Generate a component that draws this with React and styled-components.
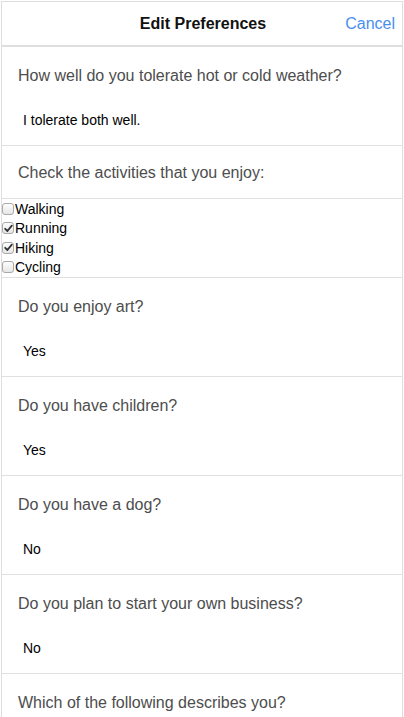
import React from "react";
import styled, { createGlobalStyle } from "styled-components";

const Global = createGlobalStyle`
  html, body { margin: 0; padding: 0; background: #fff; }
  body { font-family: "Liberation Sans", Arial, Helvetica, sans-serif; }
  * { box-sizing: border-box; }
`;

const Page = styled.div`
  margin: 1px 0 0 1px;
  width: 402px;
  border: 1px solid #dedede;
  border-bottom: none;
  overflow: hidden;
`;

const Header = styled.header`
  position: relative;
  height: 45px;
  display: flex;
  align-items: center;
  justify-content: center;
  border-bottom: 2px solid #dedede;
`;

const Title = styled.h1`
  margin: 0;
  font-size: 16px;
  font-weight: bold;
  color: #111;
  transform: translateX(1px);
`;

const CancelButton = styled.button`
  position: absolute;
  right: 7px;
  top: 50%;
  transform: translateY(-50%);
  background: none;
  border: none;
  padding: 0;
  font-family: inherit;
  font-size: 16px;
  color: #4a8ef0;
  cursor: pointer;
`;

const Section = styled.section`
  border-bottom: 1px solid #e0e0e0;
  padding: ${(p) => (p.$compact ? "17px 16px 15px" : "19px 16px 15px")};
`;

const Question = styled.div`
  font-size: 16px;
  line-height: 20px;
  color: #4d4d4d;
`;

const Answer = styled.div`
  margin-top: 24px;
  padding-left: 5px;
  font-size: 14px;
  line-height: 20px;
  color: #000;
`;

const CheckList = styled.div`
  border-bottom: 1px solid #e0e0e0;
  display: flex;
  flex-direction: column;
`;

const CheckRow = styled.label`
  display: flex;
  align-items: center;
  height: 19.5px;
  font-size: 14px;
  color: #000;
`;

const Box = styled.span`
  width: 12px;
  height: 12px;
  margin: 0 1px 0 0;
  border: 1px solid #a9a9a9;
  border-radius: 3px;
  background: linear-gradient(#fdfdfd, #e6e6e6);
  display: inline-flex;
  align-items: center;
  justify-content: center;
  flex: none;
`;

const Check = () => (
  <svg width="9" height="9" viewBox="0 0 9 9">
    <path d="M1.2 4.8 L3.4 7 L7.8 1.6" fill="none" stroke="#333" strokeWidth="1.8" strokeLinecap="round" strokeLinejoin="round" />
  </svg>
);

const activities = [
  { name: "Walking", checked: false },
  { name: "Running", checked: true },
  { name: "Hiking", checked: true },
  { name: "Cycling", checked: false },
];

const QA = ({ q, a }) => (
  <Section>
    <Question>{q}</Question>
    <Answer>{a}</Answer>
  </Section>
);

export default function App() {
  return (
    <>
      <Global />
      <Page>
        <Header>
          <Title>Edit Preferences</Title>
          <CancelButton>Cancel</CancelButton>
        </Header>
        <QA q="How well do you tolerate hot or cold weather?" a="I tolerate both well." />
        <Section $compact>
          <Question>Check the activities that you enjoy:</Question>
        </Section>
        <CheckList>
          {activities.map((act) => (
            <CheckRow key={act.name}>
              <Box>{act.checked && <Check />}</Box>
              {act.name}
            </CheckRow>
          ))}
        </CheckList>
        <QA q="Do you enjoy art?" a="Yes" />
        <QA q="Do you have children?" a="Yes" />
        <QA q="Do you have a dog?" a="No" />
        <QA q="Do you plan to start your own business?" a="No" />
        <QA q="Which of the following describes you?" a="" />
      </Page>
    </>
  );
}
